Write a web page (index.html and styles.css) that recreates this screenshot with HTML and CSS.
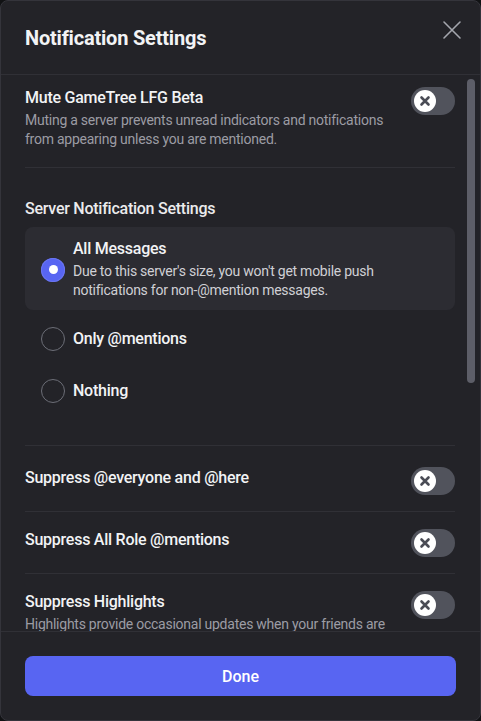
FILE: index.html
```html
<!DOCTYPE html>
<html lang="en">
<head>
<meta charset="utf-8">
<title>Notification Settings</title>
<link rel="stylesheet" href="styles.css">
</head>
<body>
<div class="modal">
  <header class="modal-header">
    <h1 class="modal-title">Notification Settings</h1>
    <button class="close-btn" aria-label="Close">
      <svg width="24" height="24" viewBox="0 0 24 24"><path d="M4 4 L20 20 M20 4 L4 20" stroke="currentColor" stroke-width="1.6" stroke-linecap="round" fill="none"/></svg>
    </button>
  </header>

  <div class="body-wrap">
    <div class="modal-body">
      <section class="setting setting-first">
        <div class="setting-text">
          <div class="setting-title">Mute GameTree LFG Beta</div>
          <div class="setting-desc">Muting a server prevents unread indicators and notifications from appearing unless you are mentioned.</div>
        </div>
        <div class="toggle"><span class="knob"><svg width="12" height="12" viewBox="0 0 12 12"><path d="M2.5 2.5 L9.5 9.5 M9.5 2.5 L2.5 9.5" stroke="currentColor" stroke-width="2.6" stroke-linecap="round"/></svg></span></div>
      </section>

      <section class="group">
        <h2 class="group-title">Server Notification Settings</h2>
        <div class="options">
          <div class="option option-selected">
            <span class="radio radio-on"></span>
            <div class="option-text">
              <div class="option-title">All Messages</div>
              <div class="option-desc">Due to this server's size, you won't get mobile push notifications for non-@mention messages.</div>
            </div>
          </div>
          <div class="option">
            <span class="radio"></span>
            <div class="option-text"><div class="option-title">Only @mentions</div></div>
          </div>
          <div class="option">
            <span class="radio"></span>
            <div class="option-text"><div class="option-title">Nothing</div></div>
          </div>
        </div>
      </section>

      <section class="setting setting-row first-row">
        <div class="setting-text"><div class="setting-title">Suppress @everyone and @here</div></div>
        <div class="toggle"><span class="knob"><svg width="12" height="12" viewBox="0 0 12 12"><path d="M2.5 2.5 L9.5 9.5 M9.5 2.5 L2.5 9.5" stroke="currentColor" stroke-width="2.6" stroke-linecap="round"/></svg></span></div>
      </section>
      <section class="setting setting-row">
        <div class="setting-text"><div class="setting-title">Suppress All Role @mentions</div></div>
        <div class="toggle"><span class="knob"><svg width="12" height="12" viewBox="0 0 12 12"><path d="M2.5 2.5 L9.5 9.5 M9.5 2.5 L2.5 9.5" stroke="currentColor" stroke-width="2.6" stroke-linecap="round"/></svg></span></div>
      </section>
      <section class="setting setting-row last-row">
        <div class="setting-text">
          <div class="setting-title">Suppress Highlights</div>
          <div class="setting-desc">Highlights provide occasional updates when your friends are chatting in busy servers and more.</div>
        </div>
        <div class="toggle"><span class="knob"><svg width="12" height="12" viewBox="0 0 12 12"><path d="M2.5 2.5 L9.5 9.5 M9.5 2.5 L2.5 9.5" stroke="currentColor" stroke-width="2.6" stroke-linecap="round"/></svg></span></div>
      </section>
    </div>
    <div class="scroll-thumb"></div>
  </div>

  <footer class="modal-footer">
    <button class="done-btn">Done</button>
  </footer>
</div>
</body>
</html>
```

FILE: styles.css
```css
* { box-sizing: border-box; }

html, body {
  margin: 0;
  height: 100%;
  background: #111214;
}

body {
  font-family: Roboto, "Noto Sans", "Liberation Sans", sans-serif;
  color: #f2f3f5;
}

.modal {
  height: 100vh;
  display: flex;
  flex-direction: column;
  background: #232328;
  border: 1px solid #34343b;
  border-radius: 8px;
  overflow: hidden;
}

.modal-header {
  display: flex;
  justify-content: space-between;
  align-items: flex-start;
  padding: 25px 16px 24px 24px;
  border-bottom: 1px solid #303036;
}

.modal-title {
  margin: 0;
  font-size: 20px;
  line-height: 24px;
  font-weight: 700;
  letter-spacing: -0.2px;
  color: #f2f3f5;
}

.close-btn {
  margin-top: -8px;
  width: 24px;
  height: 24px;
  padding: 0;
  border: 0;
  background: none;
  color: #a4a6ad;
  display: flex;
}

.body-wrap {
  flex: 1;
  min-height: 0;
  position: relative;
  display: flex;
}

.modal-body {
  flex: 1;
  overflow: hidden;
  padding: 0 25px 0 24px;
}

.scroll-thumb {
  position: absolute;
  top: 4px;
  right: 5px;
  width: 8px;
  height: 304px;
  border-radius: 4px;
  background: #5d5e68;
}

.setting {
  display: flex;
  justify-content: space-between;
  align-items: flex-start;
  gap: 16px;
  border-bottom: 1px solid #303036;
}

.setting-first { padding: 12px 0 18px; }
.setting-first .setting-title { margin-top: 1px; }
.setting-row { padding: 17px 0 16px; }
.first-row { padding-top: 21px; }
.last-row { border-bottom: 0; }
.setting-row .setting-title { margin-top: 1px; }

.setting-title {
  font-size: 16px;
  line-height: 20px;
  font-weight: 500;
  letter-spacing: -0.25px;
  color: #f2f3f5;
}

.setting-desc {
  margin-top: 3px;
  font-size: 14px;
  line-height: 19px;
  letter-spacing: -0.25px;
  color: #9c9ca4;
}

.toggle {
  flex: none;
  width: 44px;
  height: 28px;
  border-radius: 14px;
  background: #51535c;
  padding: 3px;
}

.knob {
  width: 22px;
  height: 22px;
  border-radius: 50%;
  background: #ffffff;
  color: #4a4c55;
  display: flex;
  align-items: center;
  justify-content: center;
}

.group {
  padding: 31px 0 31px;
  border-bottom: 1px solid #303036;
}

.group-title {
  margin: 0;
  font-size: 16px;
  line-height: 20px;
  font-weight: 500;
  letter-spacing: -0.25px;
  color: #ebebed;
}

.options {
  margin-top: 8px;
  display: flex;
  flex-direction: column;
  gap: 6px;
}

.option {
  display: flex;
  align-items: center;
  gap: 8px;
  padding: 11px 16px;
  border-radius: 8px;
}

.option-selected {
  background: #2c2c32;
  padding: 12px 16px 10px;
}

.radio {
  flex: none;
  width: 24px;
  height: 24px;
  border-radius: 50%;
  border: 1px solid #6c6e77;
}

.radio-on {
  border: 0;
  background: #5865f2;
  box-shadow: 0 0 0 1px #6b76f0 inset;
  display: flex;
  align-items: center;
  justify-content: center;
}

.radio-on::after {
  content: "";
  width: 9px;
  height: 9px;
  border-radius: 50%;
  background: #ffffff;
}

.option-title {
  font-size: 16px;
  line-height: 20px;
  font-weight: 500;
  letter-spacing: -0.25px;
  color: #f2f3f5;
}

.option-desc {
  margin-top: 3px;
  font-size: 14px;
  line-height: 19px;
  letter-spacing: -0.25px;
  color: #d0d0d5;
}

.modal-footer {
  padding: 24px 24px 24px;
  border-top: 1px solid #303036;
}

.done-btn {
  width: 100%;
  height: 40px;
  border: 0;
  border-radius: 8px;
  background: #5865f2;
  color: #ffffff;
  font-family: inherit;
  font-size: 16px;
  font-weight: 500;
}
```
